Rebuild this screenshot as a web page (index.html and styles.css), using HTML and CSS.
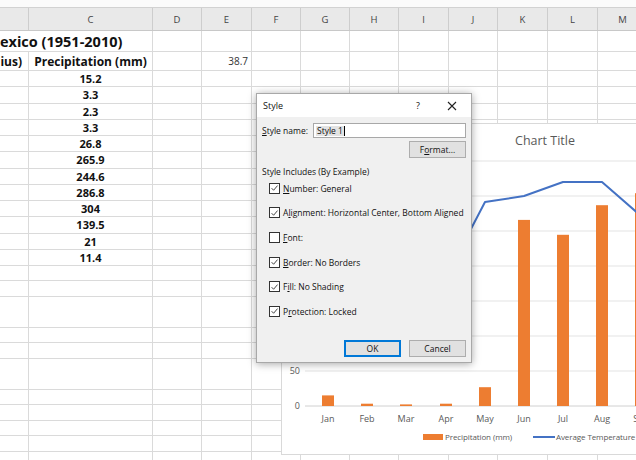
FILE: index.html
```html
<!DOCTYPE html>
<html>
<head>
<meta charset="utf-8">
<link rel="stylesheet" href="styles.css">
</head>
<body>
<div class="app">
  <div class="topstrip"></div>
  <div class="colhead">
    <div class="h"></div><div class="h">C</div><div class="h">D</div><div class="h">E</div><div class="h">F</div><div class="h">G</div><div class="h">H</div><div class="h">I</div><div class="h">J</div><div class="h">K</div><div class="h">L</div><div class="h">M</div>
  </div>
  <div class="sheet">
    <div class="row r-title">
      <div class="c title span2">exico (1951-2010)</div><div class="c"></div><div class="c"></div><div class="c"></div><div class="c"></div><div class="c"></div><div class="c"></div><div class="c"></div><div class="c"></div><div class="c"></div><div class="c"></div>
    </div>
    <div class="row r-head">
      <div class="c hdr right">ius)</div><div class="c hdr center">Precipitation (mm)</div><div class="c"></div><div class="c num">38.7</div><div class="c"></div><div class="c"></div><div class="c"></div><div class="c"></div><div class="c"></div><div class="c"></div><div class="c"></div><div class="c"></div>
    </div>
    <div class="row r"><div class="c"></div><div class="c val">15.2</div><div class="c"></div><div class="c"></div><div class="c"></div><div class="c"></div><div class="c"></div><div class="c"></div><div class="c"></div><div class="c"></div><div class="c"></div><div class="c"></div></div>
    <div class="row r"><div class="c"></div><div class="c val">3.3</div><div class="c"></div><div class="c"></div><div class="c"></div><div class="c"></div><div class="c"></div><div class="c"></div><div class="c"></div><div class="c"></div><div class="c"></div><div class="c"></div></div>
    <div class="row r"><div class="c"></div><div class="c val">2.3</div><div class="c"></div><div class="c"></div><div class="c"></div><div class="c"></div><div class="c"></div><div class="c"></div><div class="c"></div><div class="c"></div><div class="c"></div><div class="c"></div></div>
    <div class="row r"><div class="c"></div><div class="c val">3.3</div><div class="c"></div><div class="c"></div><div class="c"></div><div class="c"></div><div class="c"></div><div class="c"></div><div class="c"></div><div class="c"></div><div class="c"></div><div class="c"></div></div>
    <div class="row r"><div class="c"></div><div class="c val">26.8</div><div class="c"></div><div class="c"></div><div class="c"></div><div class="c"></div><div class="c"></div><div class="c"></div><div class="c"></div><div class="c"></div><div class="c"></div><div class="c"></div></div>
    <div class="row r"><div class="c"></div><div class="c val">265.9</div><div class="c"></div><div class="c"></div><div class="c"></div><div class="c"></div><div class="c"></div><div class="c"></div><div class="c"></div><div class="c"></div><div class="c"></div><div class="c"></div></div>
    <div class="row r"><div class="c"></div><div class="c val">244.6</div><div class="c"></div><div class="c"></div><div class="c"></div><div class="c"></div><div class="c"></div><div class="c"></div><div class="c"></div><div class="c"></div><div class="c"></div><div class="c"></div></div>
    <div class="row r"><div class="c"></div><div class="c val">286.8</div><div class="c"></div><div class="c"></div><div class="c"></div><div class="c"></div><div class="c"></div><div class="c"></div><div class="c"></div><div class="c"></div><div class="c"></div><div class="c"></div></div>
    <div class="row r"><div class="c"></div><div class="c val">304</div><div class="c"></div><div class="c"></div><div class="c"></div><div class="c"></div><div class="c"></div><div class="c"></div><div class="c"></div><div class="c"></div><div class="c"></div><div class="c"></div></div>
    <div class="row r"><div class="c"></div><div class="c val">139.5</div><div class="c"></div><div class="c"></div><div class="c"></div><div class="c"></div><div class="c"></div><div class="c"></div><div class="c"></div><div class="c"></div><div class="c"></div><div class="c"></div></div>
    <div class="row r"><div class="c"></div><div class="c val">21</div><div class="c"></div><div class="c"></div><div class="c"></div><div class="c"></div><div class="c"></div><div class="c"></div><div class="c"></div><div class="c"></div><div class="c"></div><div class="c"></div></div>
    <div class="row r"><div class="c"></div><div class="c val">11.4</div><div class="c"></div><div class="c"></div><div class="c"></div><div class="c"></div><div class="c"></div><div class="c"></div><div class="c"></div><div class="c"></div><div class="c"></div><div class="c"></div></div>
    <div class="filler">
      <div class="fc"></div><div class="fc"></div><div class="fc"></div><div class="fc"></div><div class="fc"></div><div class="fc"></div><div class="fc"></div><div class="fc"></div><div class="fc"></div><div class="fc"></div><div class="fc"></div><div class="fc"></div>
    </div>
  </div>

  <div class="chart">
    <svg class="chart-svg" width="370" height="332" viewBox="0 0 370 332">
      <text class="ctitle" x="264" y="22" text-anchor="middle">Chart Title</text>
      <g class="grid">
        <line x1="24" y1="38" x2="370" y2="38"/>
        <line x1="24" y1="73" x2="370" y2="73"/>
        <line x1="24" y1="108" x2="370" y2="108"/>
        <line x1="24" y1="143" x2="370" y2="143"/>
        <line x1="24" y1="178" x2="370" y2="178"/>
        <line x1="24" y1="213" x2="370" y2="213"/>
        <line x1="24" y1="248" x2="370" y2="248"/>
        <line x1="24" y1="283" x2="370" y2="283"/>
      </g>
      <g class="ylab">
        <text x="19" y="251" text-anchor="end">50</text>
        <text x="19" y="286" text-anchor="end">0</text>
      </g>
      <g class="bars">
        <rect x="41" y="272.4" width="12" height="10.6"/>
        <rect x="80" y="280.7" width="12" height="2.3"/>
        <rect x="119" y="281.4" width="12" height="1.6"/>
        <rect x="159" y="280.7" width="12" height="2.3"/>
        <rect x="198" y="264.2" width="12" height="18.8"/>
        <rect x="237" y="96.9" width="12" height="186.1"/>
        <rect x="276" y="111.8" width="12" height="171.2"/>
        <rect x="315" y="82.2" width="12" height="200.8"/>
        <rect x="354" y="70.2" width="12" height="212.8"/>
      </g>
      <polyline class="temp" points="47,230 86,215 125,192 165,154 204,79 243,73 282,59 321,59 360,93"/>
      <g class="xlab">
        <text x="47" y="299" text-anchor="middle">Jan</text>
        <text x="86" y="299" text-anchor="middle">Feb</text>
        <text x="125" y="299" text-anchor="middle">Mar</text>
        <text x="165" y="299" text-anchor="middle">Apr</text>
        <text x="204" y="299" text-anchor="middle">May</text>
        <text x="243" y="299" text-anchor="middle">Jun</text>
        <text x="282" y="299" text-anchor="middle">Jul</text>
        <text x="321" y="299" text-anchor="middle">Aug</text>
        <text x="360" y="299" text-anchor="middle">Sep</text>
      </g>
      <g class="legend">
        <rect x="142" y="311" width="20" height="6" fill="#ed7d31"/>
        <text x="164" y="317">Precipitation (mm)</text>
        <line x1="252" y1="314" x2="274" y2="314"/>
        <text x="275" y="317">Average Temperature</text>
      </g>
    </svg>
  </div>

  <div class="dialog">
    <div class="dlg-title">
      <span class="dlg-name">Style</span>
      <span class="help">?</span>
      <span class="close"><svg width="10" height="10" viewBox="0 0 10 10"><path d="M1 1L9 9M9 1L1 9" stroke="#222" stroke-width="1.1" fill="none"/></svg></span>
    </div>
    <div class="dlg-body">
      <div class="name-row">
        <span class="lbl"><u>S</u>tyle name:</span>
        <div class="input"><span class="sel">Style 1</span><span class="caret"></span></div>
      </div>
      <div class="fmt-row"><button class="btn fmt">F<u>o</u>rmat...</button></div>
      <div class="group-title">Style Includes (By Example)</div>
      <ul class="checks">
        <li><span class="cb on"><svg width="10" height="10" viewBox="0 0 10 10"><path d="M1.8 5.2L4 7.5L8.4 2.3" stroke="#333" stroke-width="1" fill="none"/></svg></span><span><u>N</u>umber: General</span></li>
        <li><span class="cb on"><svg width="10" height="10" viewBox="0 0 10 10"><path d="M1.8 5.2L4 7.5L8.4 2.3" stroke="#333" stroke-width="1" fill="none"/></svg></span><span>A<u>l</u>ignment: Horizontal Center, Bottom Aligned</span></li>
        <li><span class="cb"></span><span><u>F</u>ont:</span></li>
        <li><span class="cb on"><svg width="10" height="10" viewBox="0 0 10 10"><path d="M1.8 5.2L4 7.5L8.4 2.3" stroke="#333" stroke-width="1" fill="none"/></svg></span><span><u>B</u>order: No Borders</span></li>
        <li><span class="cb on"><svg width="10" height="10" viewBox="0 0 10 10"><path d="M1.8 5.2L4 7.5L8.4 2.3" stroke="#333" stroke-width="1" fill="none"/></svg></span><span>F<u>i</u>ll: No Shading</span></li>
        <li><span class="cb on"><svg width="10" height="10" viewBox="0 0 10 10"><path d="M1.8 5.2L4 7.5L8.4 2.3" stroke="#333" stroke-width="1" fill="none"/></svg></span><span>P<u>r</u>otection: Locked</span></li>
      </ul>
      <div class="actions">
        <button class="btn ok">OK</button>
        <button class="btn">Cancel</button>
      </div>
    </div>
  </div>
</div>
</body>
</html>
```

FILE: styles.css
```css
* { box-sizing: border-box; }
html, body { margin: 0; padding: 0; }
body {
  width: 636px;
  height: 460px;
  overflow: hidden;
  background: #fff;
  font-family: "Open Sans", "Noto Sans", sans-serif;
}
.app {
  position: relative;
  width: 636px;
  height: 460px;
  overflow: hidden;
  --cols: 29px 124px 49px 50px 49px 49px 49px 50px 49px 50px 50px 50px;
}
.topstrip {
  height: 8px;
  background: #fbfbfb;
  border-bottom: 1px solid #d2d2d2;
}
.colhead {
  display: grid;
  grid-template-columns: var(--cols);
  height: 23px;
  background: #e9e9e9;
  border-bottom: 1px solid #c8c8c8;
}
.colhead .h {
  border-right: 1px solid #cdcdcd;
  display: flex;
  align-items: center;
  justify-content: center;
  font-size: 9.5px;
  color: #444;
}
.sheet { display: flex; flex-direction: column; }
.row {
  display: grid;
  grid-template-columns: var(--cols);
}
.r-title { height: 21px; }
.r-head { height: 19px; }
.r { height: 16.25px; }
.c {
  border-right: 1px solid #dadada;
  border-bottom: 1px solid #dadada;
  display: flex;
  align-items: center;
  overflow: hidden;
  white-space: nowrap;
  color: #111;
}
.span2 { grid-column: span 2; }
.title {
  font-weight: 700;
  font-size: 14.5px;
  padding-left: 0;
}
.hdr {
  font-weight: 700;
  font-size: 12px;
}
.right { justify-content: flex-end; padding-right: 6px; }
.center { justify-content: center; }
.num {
  justify-content: flex-end;
  padding-right: 3px;
  font-size: 10px;
  color: #333;
}
.val {
  justify-content: center;
  font-weight: 700;
  font-size: 11px;
}
.filler {
  height: 200px;
  flex: none;
  display: grid;
  grid-template-columns: var(--cols);
}
.fc {
  border-right: 1px solid #dadada;
  background: repeating-linear-gradient(to bottom, transparent 0, transparent 14.5px, #dadada 14.5px, #dadada 15.5px);
}

/* chart overlay */
.chart {
  position: absolute;
  left: 281px;
  top: 123px;
  width: 370px;
  height: 332px;
  background: #fff;
  border: 1px solid #d9d9d9;
}
.chart-svg { display: block; position: absolute; left: -1px; top: -1px; }
.ctitle { font-family: "Open Sans", sans-serif; font-size: 12.5px; fill: #595959; }
.grid line { stroke: #e3e3e3; stroke-width: 1; }
.grid line:last-child { stroke: #d0d0d0; }
.ylab text, .xlab text { font-family: "Open Sans", sans-serif; font-size: 9px; fill: #595959; }
.bars rect { fill: #ed7d31; }
.temp { fill: none; stroke: #4472c4; stroke-width: 2; stroke-linejoin: round; }
.legend text { font-family: "Open Sans", sans-serif; font-size: 8px; fill: #595959; letter-spacing: -0.1px; }
.legend line { stroke: #4472c4; stroke-width: 2; }

/* dialog overlay */
.dialog {
  position: absolute;
  left: 256px;
  top: 93px;
  width: 216px;
  height: 270px;
  background: #f0f0f0;
  border: 1px solid #a8a8a8;
  box-shadow: 0 1px 8px rgba(0,0,0,0.35);
  display: flex;
  flex-direction: column;
  font-family: "Open Sans", "Noto Sans", sans-serif;
  font-size: 8.5px;
  color: #111;
}
.dlg-title {
  height: 23px;
  background: #fff;
  display: flex;
  align-items: center;
  padding-left: 6px;
  font-size: 9px;
}
.dlg-name { flex: 1; }
.help { width: 12px; text-align: center; margin-right: 22px; font-size: 9px; }
.close { width: 12px; display: flex; justify-content: center; margin-right: 13px; }
.dlg-body {
  flex: 1;
  display: flex;
  flex-direction: column;
  padding: 6px 5px 5px 5px;
}
.name-row { display: flex; align-items: center; height: 15px; }
.lbl { width: 51px; }
.input {
  flex: 1;
  height: 15px;
  background: #fff;
  border: 1px solid #a8a8a8;
  display: flex;
  align-items: center;
  padding-left: 2px;
}
.sel { background: #e3e3e3; padding: 0 1px; line-height: 10px; }
.caret { width: 1px; height: 10px; background: #000; }
.fmt-row { display: flex; justify-content: flex-end; margin-top: 3px; }
.btn {
  font: inherit;
  color: #111;
  background: #e1e1e1;
  border: 1px solid #adadad;
  height: 17px;
  width: 57px;
  padding: 0;
  margin: 0;
}
.fmt { width: 57px; margin-right: 0; }
.group-title { margin-top: 8px; height: 12px; line-height: 12px; }
.checks {
  list-style: none;
  margin: -2px 0 0 0;
  padding: 0 0 0 7px;
}
.checks li {
  height: 24.6px;
  display: flex;
  align-items: center;
  gap: 3px;
}
.cb {
  width: 11px;
  height: 11px;
  border: 1px solid #333;
  background: #fff;
  display: flex;
  align-items: center;
  justify-content: center;
}
.actions {
  margin-top: auto;
  display: flex;
  justify-content: flex-end;
  gap: 8px;
}
.ok {
  border: 1px solid #0078d7;
  box-shadow: inset 0 0 0 1px #0078d7;
}
```
